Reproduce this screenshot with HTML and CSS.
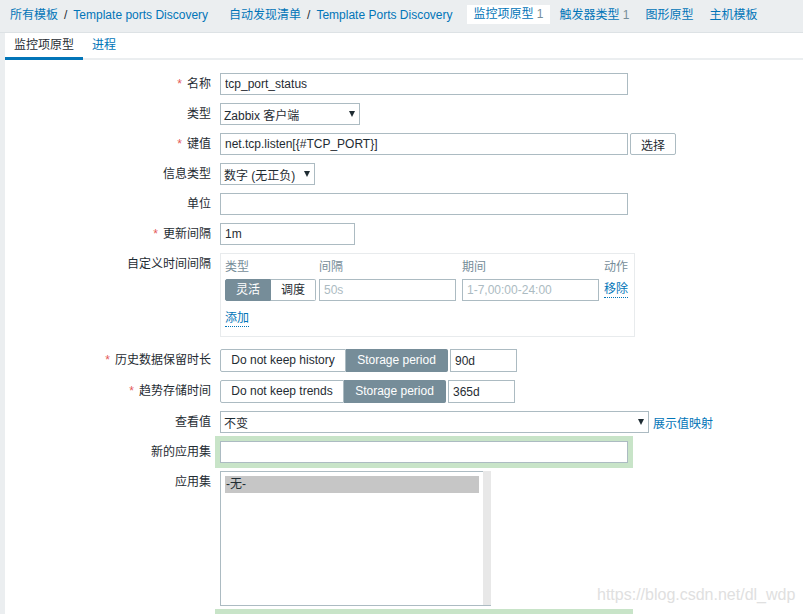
FILE: index.html
```html
<!DOCTYPE html>
<html lang="zh">
<head>
<meta charset="utf-8">
<title>监控项原型</title>
<link rel="stylesheet" href="styles.css">
</head>
<body>
<div class="topbar">
  <a class="crumb">所有模板</a><span class="sep">/</span><a class="crumb">Template ports Discovery</a>
  <a class="crumb grp">自动发现清单</a><span class="sep">/</span><a class="crumb">Template Ports Discovery</a>
  <span class="navtab current first">监控项原型 <span class="cnt">1</span></span>
  <a class="navtab">触发器类型 <span class="cnt">1</span></a>
  <a class="navtab">图形原型</a>
  <a class="navtab">主机模板</a>
</div>
<div class="panel">
  <div class="tabs"><span class="tab active">监控项原型</span><a class="tab">进程</a></div>
  <div class="form">
    <div class="lbl"><span class="req">*</span>名称</div>
    <div class="field"><input class="inp w408" value="tcp_port_status"></div>

    <div class="lbl">类型</div>
    <div class="field"><div class="sel w140"><span>Zabbix 客户端</span><i class="arrow"></i></div></div>

    <div class="lbl"><span class="req">*</span>键值</div>
    <div class="field"><input class="inp w408" value="net.tcp.listen[{#TCP_PORT}]"><button class="btn">选择</button></div>

    <div class="lbl">信息类型</div>
    <div class="field"><div class="sel w95"><span>数字 (无正负)</span><i class="arrow"></i></div></div>

    <div class="lbl">单位</div>
    <div class="field"><input class="inp w408" value=""></div>

    <div class="lbl"><span class="req">*</span>更新间隔</div>
    <div class="field"><input class="inp w135" value="1m"></div>

    <div class="lbl">自定义时间间隔</div>
    <div class="field">
      <div class="sched">
        <div class="sched-head"><span class="c1">类型</span><span class="c2">间隔</span><span class="c3">期间</span><span>动作</span></div>
        <div class="sched-row">
          <div class="seg small"><span class="on s46">灵活</span><span class="s45">调度</span></div>
          <input class="inp ph w137 m3" placeholder="50s">
          <input class="inp ph w137 m5" placeholder="1-7,00:00-24:00">
          <a class="dlink">移除</a>
        </div>
        <div class="sched-add"><a class="dlink">添加</a></div>
      </div>
    </div>

    <div class="lbl"><span class="req">*</span>历史数据保留时长</div>
    <div class="field"><div class="seg"><span class="s126">Do not keep history</span><span class="on s102">Storage period</span></div><input class="inp tall w67" value="90d"></div>

    <div class="lbl"><span class="req">*</span>趋势存储时间</div>
    <div class="field"><div class="seg"><span class="s124">Do not keep trends</span><span class="on s102">Storage period</span></div><input class="inp tall w67" value="365d"></div>

    <div class="lbl">查看值</div>
    <div class="field"><div class="sel w429"><span>不变</span><i class="arrow"></i></div><a class="maplink">展示值映射</a></div>

    <div class="lbl">新的应用集</div>
    <div class="field"><div class="hl"><input class="inp w408" value=""></div></div>

    <div class="lbl">应用集</div>
    <div class="field">
      <div class="listbox">
        <div class="opts"><div class="opt selected">-无-</div></div>
        <div class="scroll"></div>
      </div>
    </div>

    <div class="lbl"></div>
    <div class="field"><div class="hl"><input class="inp w408" value=""></div></div>
  </div>
</div>
<div class="watermark">https://blog.csdn.net/dl_wdp</div>
</body>
</html>
```
FILE: styles.css
```css
* { box-sizing: border-box; }
html, body { margin: 0; height: 100%; }
body {
  background: #ebeef0;
  font-family: "Liberation Sans", "Noto Sans CJK SC", Arial, sans-serif;
  font-size: 12px;
  color: #1f2c33;
  overflow: hidden;
  position: relative;
}
a { color: #0275b8; text-decoration: none; cursor: pointer; }

/* top bar */
.topbar {
  height: 33px;
  border-bottom: 1px solid #dde2e5;
  display: flex;
  align-items: flex-start;
  padding: 6px 0 0 10px;
  line-height: 19px;
  white-space: nowrap;
}
.sep { margin: 0 6px; color: #1f2c33; }
.grp { margin-left: 21px; }
.navtab { padding: 0 6px; margin-left: 4px; color: #0275b8; height: 19px; }
.navtab.first { margin-left: 15px; }
.navtab.current { background: #fff; margin-top: -1px; line-height: 19px; }
.cnt { color: #768d99; }

/* panel */
.panel { margin-left: 5px; background: #fff; height: calc(100% - 33px); }
.tabs { display: flex; height: 27px; border-bottom: 2px solid #ebeef0; }
.tab { padding: 0 9px; line-height: 24px; height: 27px; color: #0275b8; }
.tab.active { color: #1f2c33; border-bottom: 3px solid #0275b8; }

/* form */
.form {
  display: grid;
  grid-template-columns: 206px auto;
  column-gap: 9px;
  row-gap: 8px;
  padding-top: 13px;
  align-items: start;
}
.lbl { text-align: right; line-height: 22px; white-space: nowrap; min-height: 22px; }
.req { color: #e45959; margin-right: 5px; }
.field { display: flex; align-items: center; min-height: 22px; }

.inp {
  height: 22px;
  border: 1px solid #acbbc2;
  padding: 0 4px;
  font: inherit;
  color: #1f2c33;
  background: #fff;
  outline: none;
  margin: 0;
}
.inp.tall { height: 23px; margin-left: 2px; }
.inp.ph::placeholder { color: #acbbc2; opacity: 1; }
.w408 { width: 408px; }
.w135 { width: 135px; }
.w137 { width: 137px; }
.w67 { width: 67px; }
.m3 { margin-left: 3px; }
.m5 { margin-left: 6px; margin-right: 5px; }

.btn {
  margin-left: 2px;
  width: 46px;
  height: 22px;
  border: 1px solid #acbbc2;
  border-radius: 2px;
  background: #fff;
  font: inherit;
  color: #1f2c33;
  padding: 0;
}

.sel {
  height: 22px;
  border: 1px solid #acbbc2;
  display: flex;
  align-items: center;
  justify-content: space-between;
  padding: 0 4px 0 3px;
  white-space: nowrap;
  background: #fff;
}
.w140 { width: 140px; }
.w95 { width: 95px; }
.w429 { width: 429px; }
.arrow {
  width: 0; height: 0;
  border-left: 3px solid transparent;
  border-right: 3px solid transparent;
  border-top: 6px solid #1f2c33;
}
.maplink { margin-left: 4px; }

/* segmented */
.seg { display: flex; }
.seg span {
  height: 23px;
  line-height: 21px;
  border: 1px solid #acbbc2;
  background: #fff;
  text-align: center;
  white-space: nowrap;
}
.seg span + span { border-left: none; }
.seg span:first-child { border-radius: 2px 0 0 2px; }
.seg span:last-child { border-radius: 0 2px 2px 0; }
.seg .on { background: #768d99; border-color: #768d99; color: #fff; }
.seg.small span { height: 22px; line-height: 20px; }
.s46 { width: 46px; }
.s45 { width: 45px; }
.s126 { width: 126px; }
.s124 { width: 124px; }
.s102 { width: 102px; }

/* schedule box */
.sched {
  width: 415px;
  border: 1px solid #e8ebed;
  padding: 4px 4px 9px 4px;
  margin-bottom: 4px;
}
.sched-head { display: flex; line-height: 18px; color: #768d99; margin-bottom: 3px; }
.c1 { width: 94px; }
.c2 { width: 143px; }
.c3 { width: 142px; }
.sched-row { display: flex; align-items: center; }
.sched-add { margin-top: 8px; line-height: 18px; height: 18px; }
.dlink { border-bottom: 1px dotted #0275b8; line-height: 15px; display: inline-block; }

/* highlighted (new) field */
.hl { background: #c8e4c8; padding: 5px; margin: -5px; }

/* listbox */
.listbox {
  width: 271px;
  height: 135px;
  display: flex;
  border: 1px solid #acbbc2;
  border-right: none;
}
.opts { flex: 1; padding: 4px; }
.opt { height: 17px; line-height: 17px; padding-left: 1px; }
.opt.selected { background: #c6c6c6; }
.scroll { width: 8px; background: #e8e8e8; margin-top: -1px; }

.watermark {
  position: absolute;
  left: 597px;
  top: 586px;
  font-size: 16px;
  line-height: 18px;
  color: #e0e0e0;
  white-space: nowrap;
}
```
